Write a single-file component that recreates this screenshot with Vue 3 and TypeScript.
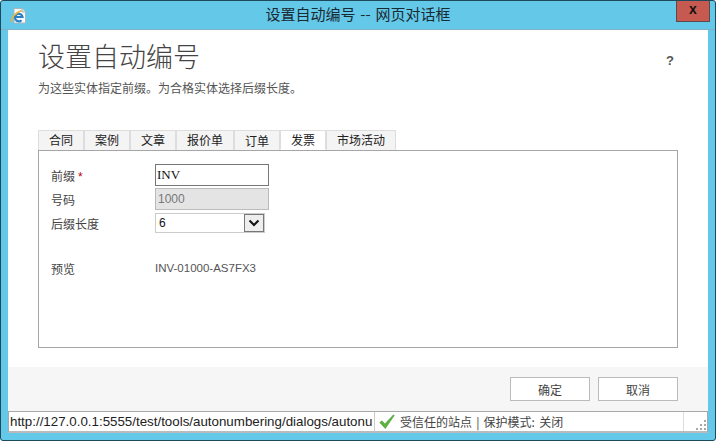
<script setup lang="ts">
const tabs = ['合同', '案例', '文章', '报价单', '订单', '发票', '市场活动']
</script>

<template>
  <div class="window">
    <header class="titlebar">
      <svg class="ie" width="18" height="18" viewBox="0 0 18 18">
        <path d="M5 1.500h8l3.500 3.500v11H5z" fill="#f7fafc" stroke="#a9b6bf" />
        <path d="M13 1.500V5h3.500" fill="#d5e2ea" stroke="#a9b6bf" />
        <path d="M6.200 10h7.300a3.800 3.800 0 1 0-1 3.200" fill="none" stroke="#2a7fc6" stroke-width="2.200" />
        <path d="M3 14.500C1.500 11.500 6 6 12.500 3.500" fill="none" stroke="#e4b53a" stroke-width="1.700" />
      </svg>
      <span class="title">设置自动编号 -- 网页对话框</span>
      <span class="close">x</span>
    </header>
    <main class="client">
      <section class="content">
        <div class="heading">
          <h1>设置自动编号</h1>
          <span class="help">?</span>
        </div>
        <p class="sub">为这些实体指定前缀。为合格实体选择后缀长度。</p>
        <nav class="tabs">
          <span v-for="t in tabs" :key="t" class="tab" :class="{ active: t === '发票', low: t === '订单' }">{{ t }}</span>
        </nav>
        <div class="panel">
          <div class="row">
            <label>前缀<em>*</em></label>
            <input class="field" value="INV" />
          </div>
          <div class="row">
            <label>号码</label>
            <input class="field off" value="1000" disabled />
          </div>
          <div class="row">
            <label>后缀长度</label>
            <div class="select">
              <span>6</span>
              <span class="arrow">
                <svg width="12" height="8" viewBox="0 0 12 8"><path d="M1.500 1.500 6 6l4.500-4.500" fill="none" stroke="#111" stroke-width="2" /></svg>
              </span>
            </div>
          </div>
          <div class="row preview">
            <label>预览</label>
            <span class="value">INV-01000-AS7FX3</span>
          </div>
        </div>
      </section>
      <footer class="actions">
        <button>确定</button>
        <button>取消</button>
      </footer>
      <div class="status">
        <span class="url">http://127.0.0.1:5555/test/tools/autonumbering/dialogs/autonu</span>
        <span class="zone">
          <svg width="16" height="15" viewBox="0 0 16 15"><path d="M.8 8.500 3 6.800 5.800 10 14.500.8 15.200 1.500 6.300 14.500z" fill="#5cb33c" stroke="#4a9a30" stroke-width=".6" stroke-linejoin="round" /></svg>
          <span class="zone-text">受信任的站点 | 保护模式: 关闭</span>
        </span>
        <span class="grip">
          <svg width="10" height="10" viewBox="0 0 10 10" fill="#a8a8a8">
            <rect x="8" y="0" width="2" height="2" />
            <rect x="4" y="4" width="2" height="2" />
            <rect x="8" y="4" width="2" height="2" />
            <rect x="0" y="8" width="2" height="2" />
            <rect x="4" y="8" width="2" height="2" />
            <rect x="8" y="8" width="2" height="2" />
          </svg>
        </span>
      </div>
    </main>
  </div>
</template>

<style scoped>
.window {
  box-sizing: border-box;
  width: 716px;
  height: 441px;
  display: flex;
  flex-direction: column;
  background: #64c8e8;
  border: 1px solid #1c4a5c;
  border-radius: 3px;
  font-family: "Noto Sans CJK SC", "Liberation Sans", sans-serif;
  color: #444;
  overflow: hidden;
}
.titlebar {
  height: 29px;
  flex: none;
  display: flex;
  align-items: center;
  justify-content: center;
  position: relative;
  box-sizing: border-box;
  padding-bottom: 3px;
  border-bottom: 1px solid #7fb0c4;
}
.ie { position: absolute; left: 8px; top: 6px; }
.title { font-size: 15px; word-spacing: 1.5px; color: #1a2a33; }
.close {
  position: absolute;
  right: 5px;
  top: 0;
  width: 34px;
  height: 21px;
  box-sizing: border-box;
  background: #c75a50;
  border: 1px solid #5b4a4a;
  border-top: none;
  color: #111;
  font: bold 14px/17px "Liberation Sans", sans-serif;
  text-align: center;
}
.client {
  flex: 1;
  margin: 0 7px 7px;
  display: flex;
  flex-direction: column;
  background: #fff;
  min-height: 0;
}
.content { flex: 1; padding: 0 30px; min-height: 0; display: flex; flex-direction: column; }
.heading { display: flex; justify-content: space-between; align-items: flex-start; height: 35px; padding-top: 8px; }
h1 { margin: 0; font-size: 27px; font-weight: 300; line-height: 36px; color: #444; }
.help { margin: 15px 4px 0 0; font: bold 13px/16px "Liberation Sans", sans-serif; color: #555; }
.sub { margin: 7px 0 0; font-size: 12px; line-height: 16px; color: #555; }
.tabs { display: flex; margin-top: 34px; height: 20px; }
.tab {
  box-sizing: border-box;
  height: 20px;
  padding: 0 10px;
  background: #f4f4f4;
  border: 1px solid #ddd;
  border-bottom: none;
  font-size: 12px;
  line-height: 18px;
  color: #222;
}
.tab.active { background: #fff; border-bottom: 1px solid #fff; position: relative; }
.tab.low { padding-top: 1px; }
.panel {
  flex: 1;
  border: 1px solid #a6a6a6;
  margin-bottom: 19px;
  padding: 12px;
}
.row { display: flex; align-items: center; height: 24px; }
.row label { width: 104px; font-size: 12px; color: #444; }
.row label em { color: #b00; font: 12px "Liberation Sans", sans-serif; margin-left: 3px; }
.field {
  box-sizing: border-box;
  width: 114px;
  height: 22px;
  padding: 0 1px;
  font: 13px "Liberation Serif", serif;
  color: #111;
  border: 1px solid #777;
  background: #fff;
  outline: none;
}
.field.off { padding-left: 2px; background: #e4e4e4; border-color: #bbb; color: #777; font-family: "Liberation Sans", sans-serif; font-size: 12px; }
.select {
  box-sizing: border-box;
  width: 110px;
  height: 20px;
  display: flex;
  justify-content: space-between;
  align-items: center;
  border: 1px solid #ccc;
  padding-left: 3px;
  font: 12px "Liberation Sans", sans-serif;
  color: #111;
}
.arrow {
  box-sizing: border-box;
  width: 20px;
  height: 18px;
  display: flex;
  align-items: center;
  justify-content: center;
  background: #eee;
  border: 1px solid #777;
}
.preview { margin-top: 21px; }
.value { font: 11.5px "Liberation Sans", sans-serif; color: #555; }
.actions {
  flex: none;
  height: 44px;
  background: #f6f6f6;
  display: flex;
  justify-content: flex-end;
  align-items: flex-start;
  gap: 8px;
  padding: 10px 30px 0 0;
  box-sizing: border-box;
}
.actions button {
  box-sizing: border-box;
  width: 80px;
  height: 24px;
  background: #fff;
  border: 1px solid #bbb;
  font: 12px "Noto Sans CJK SC", sans-serif;
  color: #444;
  padding: 0;
}
.status {
  flex: none;
  height: 22px;
  box-sizing: border-box;
  display: flex;
  background: #fff;
  border: 1px solid #a8a8a8;
  border-bottom: 2px solid #bbb;
  font-size: 12px;
  color: #222;
}
.url {
  width: 366px;
  box-sizing: border-box;
  overflow: hidden;
  white-space: nowrap;
  font: 13.33px/19px "Liberation Sans", sans-serif;
  padding-left: 1px;
  border-right: 1px solid #ccc;
}
.zone { flex: 1; display: flex; align-items: center; gap: 5px; padding-left: 4px; color: #444; }
.zone-text { word-spacing: 1.5px; }
.grip {
  box-sizing: border-box;
  width: 24px;
  border-left: 1px solid #ddd;
  display: flex;
  justify-content: flex-end;
  align-items: flex-end;
  padding: 0 1px 1px 0;
}
</style>
